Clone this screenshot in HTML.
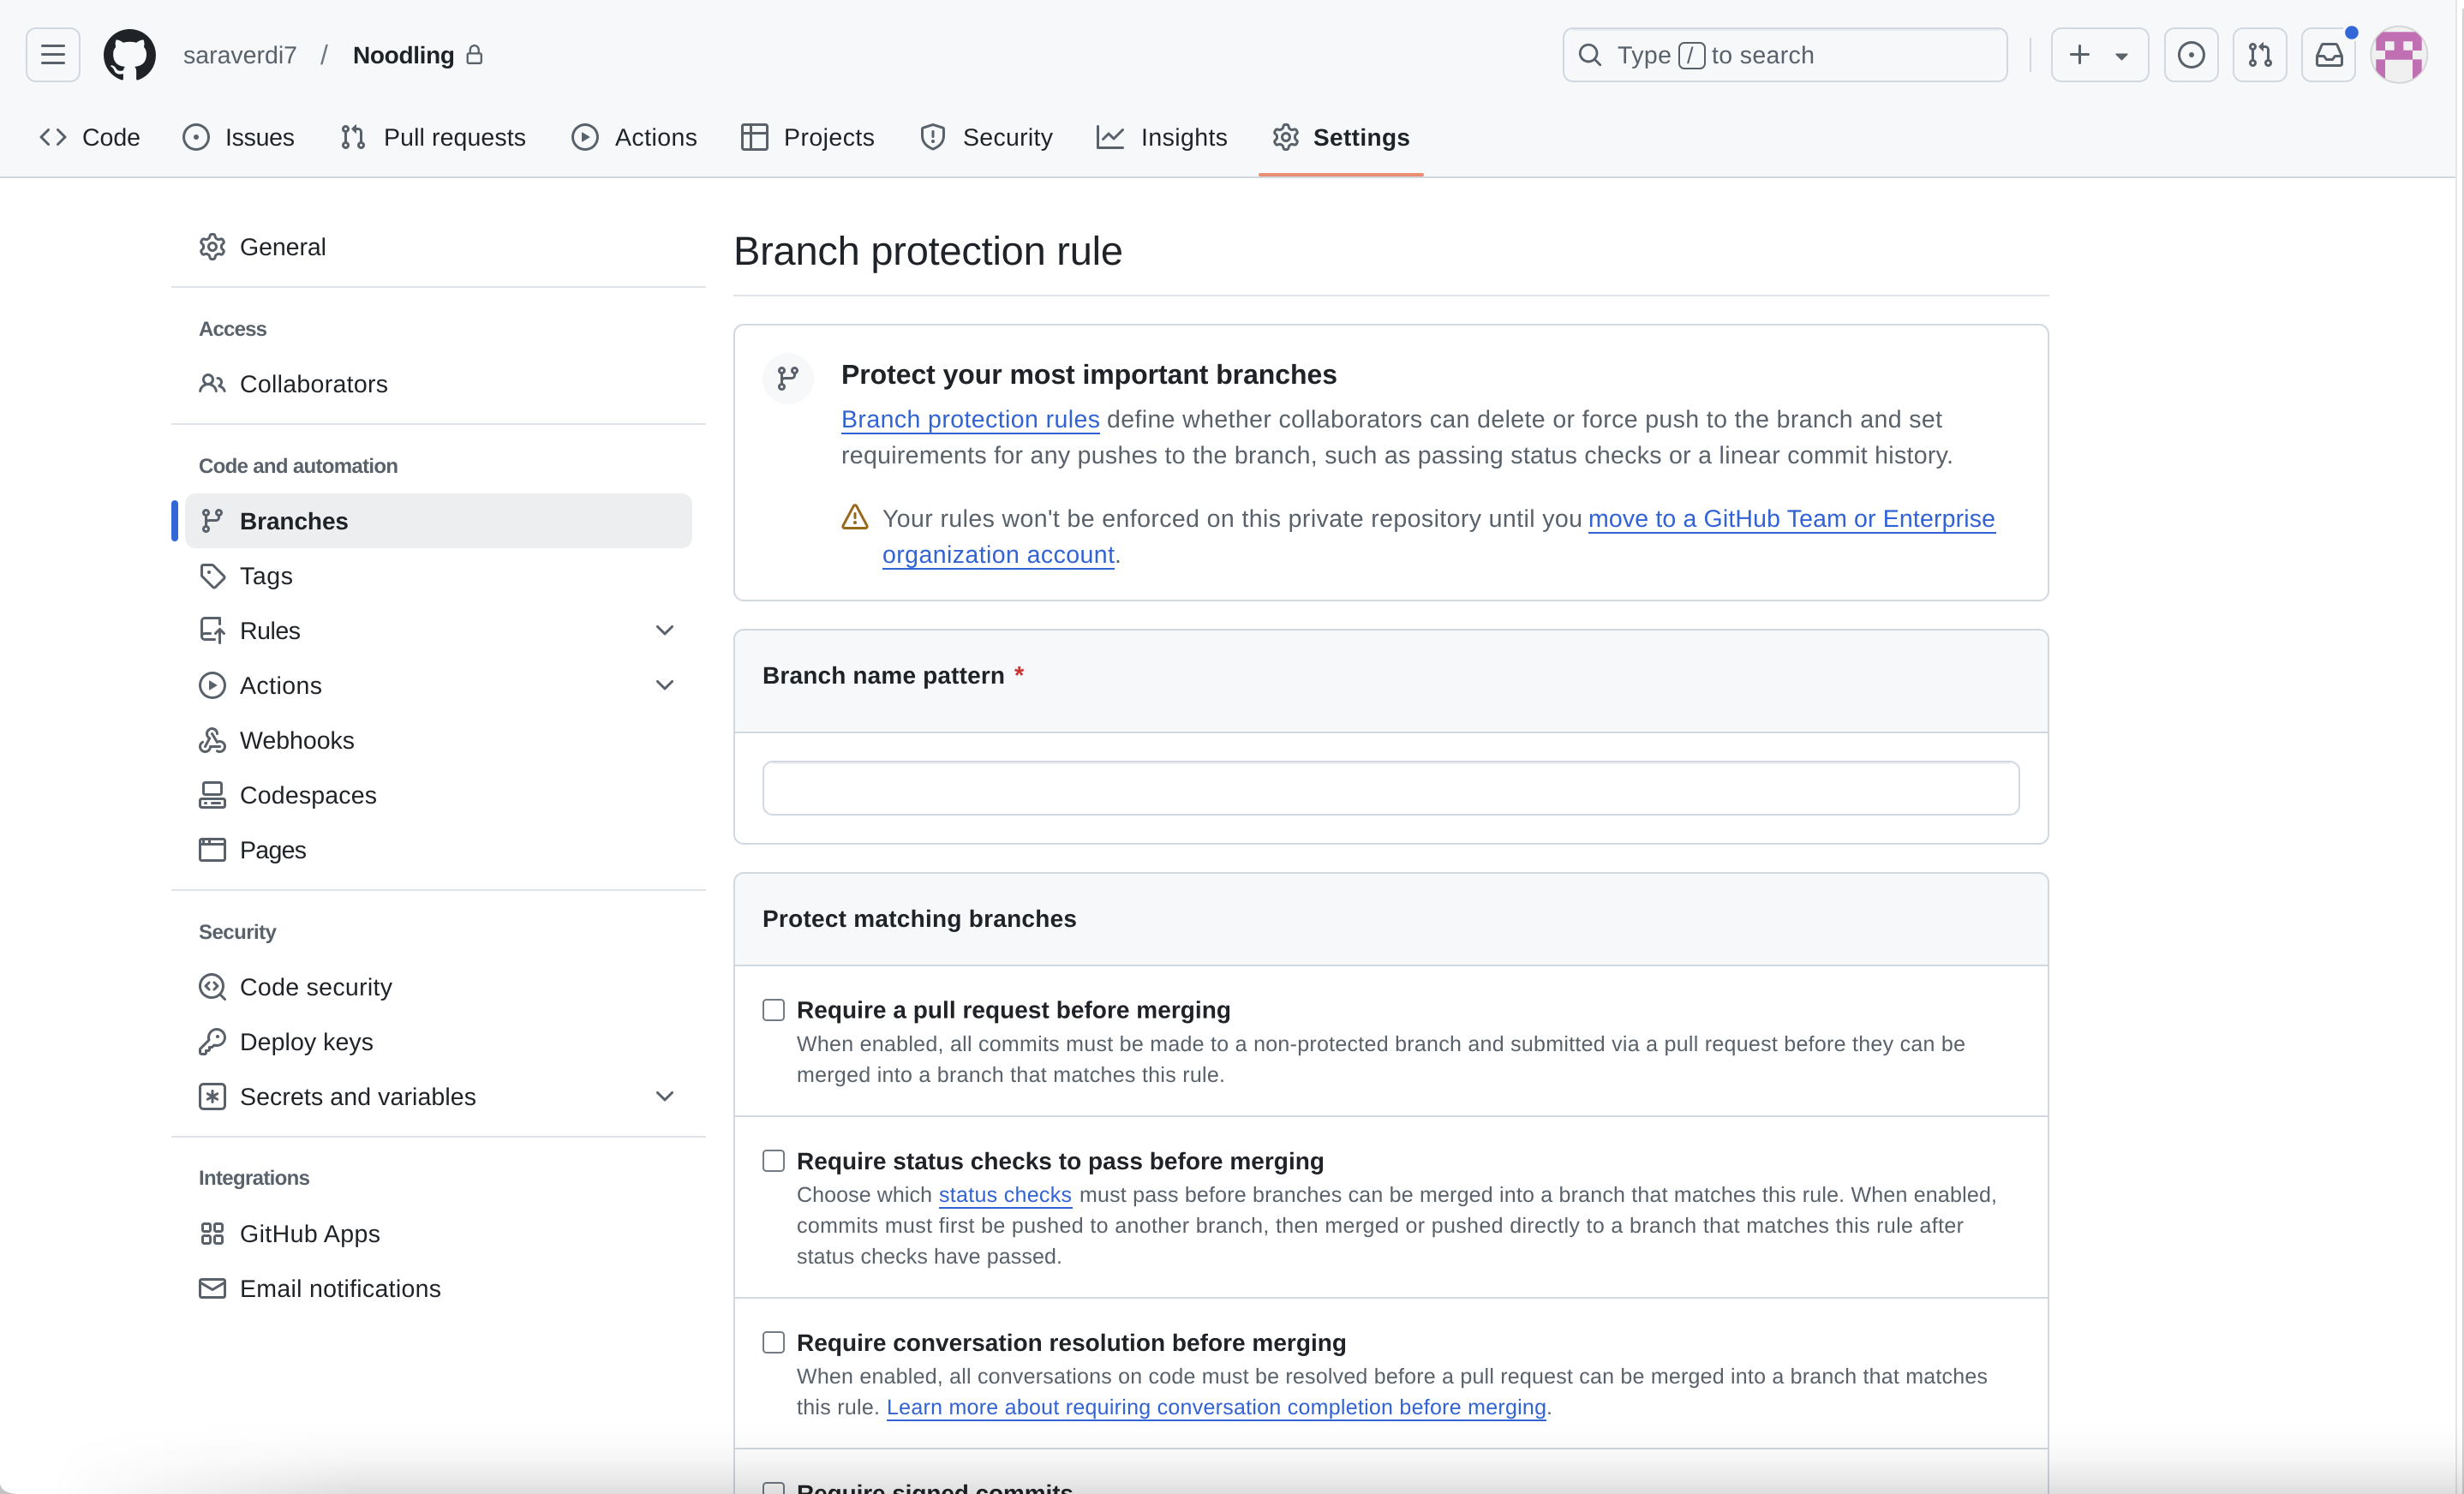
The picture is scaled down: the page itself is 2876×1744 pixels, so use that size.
<!DOCTYPE html>
<html lang="en"><head><meta charset="utf-8"><title>Branch protection rule</title>
<style>
html,body{margin:0;padding:0;background:#fff;width:2876px;height:1744px;overflow:hidden}
svg{position:absolute;left:0;top:0;display:block}
text{font-family:"Liberation Sans",sans-serif;text-rendering:geometricPrecision;font-size:28.5px;fill:#1f2328;white-space:pre}
.b{font-weight:700;font-size:28px}
.m{fill:#59616b}
.n{font-size:25px;fill:#59616b}
.l{fill:#3263d4}
.nl{font-size:25px;fill:#3263d4}
.h{font-weight:700;font-size:24px;fill:#59616b}
.i{fill:#59616b}
.bx{fill:none;stroke:#d1d8e0;stroke-width:2}
.cb{fill:#fff;stroke:#737b84;stroke-width:2}
#shade{position:absolute;left:0;top:1660px;width:2876px;height:84px;
background:linear-gradient(to bottom,rgba(0,0,0,0) 0%,rgba(0,0,0,.012) 25%,rgba(0,0,0,.04) 55%,rgba(0,0,0,.085) 80%,rgba(0,0,0,.13) 100%);
-webkit-mask-image:linear-gradient(to right,transparent 60px,#000 420px);mask-image:linear-gradient(to right,transparent 60px,#000 420px)}
</style></head><body>
<svg xmlns="http://www.w3.org/2000/svg" width="2876" height="1744" viewBox="0 0 2876 1744">
<defs>
<symbol id="bars" viewBox="0 0 16 16"><path d="M1 2.75A.75.75 0 0 1 1.75 2h12.5a.75.75 0 0 1 0 1.5H1.75A.75.75 0 0 1 1 2.75Zm0 5A.75.75 0 0 1 1.75 7h12.5a.75.75 0 0 1 0 1.5H1.75A.75.75 0 0 1 1 7.75ZM1.75 12h12.5a.75.75 0 0 1 0 1.5H1.75a.75.75 0 0 1 0-1.5Z"/></symbol>
<symbol id="code" viewBox="0 0 16 16"><path d="m11.28 3.22 4.25 4.25a.75.75 0 0 1 0 1.06l-4.25 4.25a.749.749 0 0 1-1.275-.326.749.749 0 0 1 .215-.734L13.94 8l-3.72-3.72a.749.749 0 0 1 .326-1.275.749.749 0 0 1 .734.215Zm-6.56 0a.751.751 0 0 1 1.042.018.751.751 0 0 1 .018 1.042L2.06 8l3.72 3.72a.749.749 0 0 1-.326 1.275.749.749 0 0 1-.734-.215L.47 8.53a.75.75 0 0 1 0-1.06Z"/></symbol>
<symbol id="issue" viewBox="0 0 16 16"><path d="M8 9.5a1.5 1.5 0 1 0 0-3 1.5 1.5 0 0 0 0 3Z"/><path d="M8 0a8 8 0 1 1 0 16A8 8 0 0 1 8 0ZM1.5 8a6.5 6.5 0 1 0 13 0 6.5 6.5 0 0 0-13 0Z"/></symbol>
<symbol id="pr" viewBox="0 0 16 16"><path d="M1.5 3.25a2.25 2.25 0 1 1 3 2.122v5.256a2.251 2.251 0 1 1-1.5 0V5.372A2.25 2.25 0 0 1 1.5 3.25Zm5.677-.177L9.573.677A.25.25 0 0 1 10 .854V2.5h1A2.5 2.5 0 0 1 13.5 5v5.628a2.251 2.251 0 1 1-1.5 0V5a1 1 0 0 0-1-1h-1v1.646a.25.25 0 0 1-.427.177L7.177 3.427a.25.25 0 0 1 0-.354ZM3.75 2.5a.75.75 0 1 0 0 1.5.75.75 0 0 0 0-1.5Zm0 9.5a.75.75 0 1 0 0 1.5.75.75 0 0 0 0-1.5Zm8.25.75a.75.75 0 1 0 1.5 0 .75.75 0 0 0-1.5 0Z"/></symbol>
<symbol id="play" viewBox="0 0 16 16"><path d="M8 0a8 8 0 1 1 0 16A8 8 0 0 1 8 0ZM1.5 8a6.5 6.5 0 1 0 13 0 6.5 6.5 0 0 0-13 0Zm4.879-2.773 4.264 2.559a.25.25 0 0 1 0 .428l-4.264 2.559A.25.25 0 0 1 6 10.559V5.442a.25.25 0 0 1 .379-.215Z"/></symbol>
<symbol id="table" viewBox="0 0 16 16"><path d="M0 1.75C0 .784.784 0 1.75 0h12.5C15.216 0 16 .784 16 1.75v12.5A1.75 1.75 0 0 1 14.25 16H1.75A1.75 1.75 0 0 1 0 14.25ZM6.5 6.5v8h7.75a.25.25 0 0 0 .25-.25V6.5Zm8-1.5V1.75a.25.25 0 0 0-.25-.25H6.5V5Zm-13 1.5v7.75c0 .138.112.25.25.25H5v-8ZM5 5V1.5H1.75a.25.25 0 0 0-.25.25V5Z"/></symbol>
<symbol id="shield" viewBox="0 0 16 16"><path d="M7.467.133a1.748 1.748 0 0 1 1.066 0l5.25 1.68A1.75 1.75 0 0 1 15 3.48V7c0 1.566-.32 3.182-1.303 4.682-.983 1.498-2.585 2.813-5.032 3.855a1.697 1.697 0 0 1-1.33 0c-2.447-1.042-4.049-2.357-5.032-3.855C1.32 10.182 1 8.566 1 7V3.48a1.75 1.75 0 0 1 1.217-1.667Zm.61 1.429a.25.25 0 0 0-.153 0l-5.25 1.68a.25.25 0 0 0-.174.238V7c0 1.358.275 2.666 1.057 3.86.784 1.194 2.121 2.34 4.366 3.297a.196.196 0 0 0 .154 0c2.245-.956 3.582-2.104 4.366-3.298C13.225 9.666 13.5 8.36 13.5 7V3.48a.251.251 0 0 0-.174-.237l-5.25-1.68ZM8.75 4.75v3a.75.75 0 0 1-1.5 0v-3a.75.75 0 0 1 1.5 0ZM9 10.5a1 1 0 1 1-2 0 1 1 0 0 1 2 0Z"/></symbol>
<symbol id="graph" viewBox="0 0 16 16"><path d="M1.5 1.75V13.5h13.75a.75.75 0 0 1 0 1.5H.75a.75.75 0 0 1-.75-.75V1.75a.75.75 0 0 1 1.5 0Zm14.28 2.53-5.25 5.25a.75.75 0 0 1-1.06 0L7 7.06 4.28 9.78a.751.751 0 0 1-1.042-.018.751.751 0 0 1-.018-1.042l3.25-3.25a.75.75 0 0 1 1.06 0L10 7.94l4.72-4.72a.751.751 0 0 1 1.042.018.751.751 0 0 1 .018 1.042Z"/></symbol>
<symbol id="gear" viewBox="0 0 16 16"><path d="M8 0a8.2 8.2 0 0 1 .701.031C9.444.095 9.99.645 10.16 1.29l.288 1.107c.018.066.079.158.212.224.231.114.454.243.668.386.123.082.233.09.299.071l1.103-.303c.644-.176 1.392.021 1.82.63.27.385.506.792.704 1.218.315.675.111 1.422-.364 1.891l-.814.806c-.049.048-.098.147-.088.294.016.257.016.515 0 .772-.01.147.038.246.088.294l.814.806c.475.469.679 1.216.364 1.891a7.977 7.977 0 0 1-.704 1.217c-.428.61-1.176.807-1.82.63l-1.102-.302c-.067-.019-.177-.011-.3.071a5.909 5.909 0 0 1-.668.386c-.133.066-.194.158-.211.224l-.29 1.106c-.168.646-.715 1.196-1.458 1.26a8.006 8.006 0 0 1-1.402 0c-.743-.064-1.289-.614-1.458-1.26l-.289-1.106c-.018-.066-.079-.158-.212-.224a5.738 5.738 0 0 1-.668-.386c-.123-.082-.233-.09-.299-.071l-1.103.303c-.644.176-1.392-.021-1.82-.63a8.12 8.12 0 0 1-.704-1.218c-.315-.675-.111-1.422.363-1.891l.815-.806c.05-.048.098-.147.088-.294a6.214 6.214 0 0 1 0-.772c.01-.147-.038-.246-.088-.294l-.815-.806C.635 6.045.431 5.298.746 4.623a7.92 7.92 0 0 1 .704-1.217c.428-.61 1.176-.807 1.82-.63l1.102.302c.067.019.177.011.3-.071.214-.143.437-.272.668-.386.133-.066.194-.158.211-.224l.29-1.106C6.009.645 6.556.095 7.299.03 7.53.01 7.764 0 8 0Zm-.571 1.525c-.036.003-.108.036-.137.146l-.289 1.105c-.147.561-.549.967-.998 1.189-.173.086-.34.183-.5.29-.417.278-.97.423-1.529.27l-1.103-.303c-.109-.03-.175.016-.195.045-.22.312-.412.644-.573.99-.014.031-.021.11.059.19l.815.806c.411.406.562.957.53 1.456a4.709 4.709 0 0 0 0 .582c.032.499-.119 1.05-.53 1.456l-.815.806c-.081.08-.073.159-.059.19.162.346.353.677.573.989.02.03.085.076.195.046l1.102-.303c.56-.153 1.113-.008 1.53.27.161.107.328.204.501.29.447.222.85.629.997 1.189l.289 1.105c.029.109.101.143.137.146a6.6 6.6 0 0 0 1.142 0c.036-.003.108-.036.137-.146l.289-1.105c.147-.561.549-.967.998-1.189.173-.086.34-.183.5-.29.417-.278.97-.423 1.529-.27l1.103.303c.109.029.175-.016.195-.045.22-.313.411-.644.573-.99.014-.031.021-.11-.059-.19l-.815-.806c-.411-.406-.562-.957-.53-1.456a4.709 4.709 0 0 0 0-.582c-.032-.499.119-1.05.53-1.456l.815-.806c.081-.08.073-.159.059-.19a6.464 6.464 0 0 0-.573-.989c-.02-.03-.085-.076-.195-.046l-1.102.303c-.56.153-1.113.008-1.53-.27a4.44 4.44 0 0 0-.501-.29c-.447-.222-.85-.629-.997-1.189l-.289-1.105c-.029-.11-.101-.143-.137-.146a6.6 6.6 0 0 0-1.142 0ZM11 8a3 3 0 1 1-6 0 3 3 0 0 1 6 0ZM9.5 8a1.5 1.5 0 1 0-3.001.001A1.5 1.5 0 0 0 9.5 8Z"/></symbol>
<symbol id="search" viewBox="0 0 16 16"><path d="M10.68 11.74a6 6 0 0 1-7.922-8.982 6 6 0 0 1 8.982 7.922l3.04 3.04a.749.749 0 0 1-.326 1.275.749.749 0 0 1-.734-.215ZM11.5 7a4.499 4.499 0 1 0-8.997 0A4.499 4.499 0 0 0 11.5 7Z"/></symbol>
<symbol id="plus" viewBox="0 0 16 16"><path d="M7.75 2a.75.75 0 0 1 .75.75V7h4.25a.75.75 0 0 1 0 1.5H8.5v4.25a.75.75 0 0 1-1.5 0V8.5H2.75a.75.75 0 0 1 0-1.5H7V2.75A.75.75 0 0 1 7.75 2Z"/></symbol>
<symbol id="inbox" viewBox="0 0 16 16"><path d="M2.8 2.06A1.75 1.75 0 0 1 4.41 1h7.18c.7 0 1.333.417 1.61 1.06l2.74 6.395c.04.093.06.194.06.295v4.5A1.75 1.75 0 0 1 14.25 15H1.75A1.75 1.75 0 0 1 0 13.25v-4.5c0-.101.02-.202.06-.295Zm1.61.44a.25.25 0 0 0-.23.152L1.887 8H4.75a.75.75 0 0 1 .6.3L6.625 10h2.75l1.275-1.7a.75.75 0 0 1 .6-.3h2.863L11.82 2.652a.25.25 0 0 0-.23-.152Zm10.09 7h-2.875l-1.275 1.7a.75.75 0 0 1-.6.3h-3.5a.75.75 0 0 1-.6-.3L4.375 9.5H1.5v3.75c0 .138.112.25.25.25h12.5a.25.25 0 0 0 .25-.25Z"/></symbol>
<symbol id="people" viewBox="0 0 16 16"><path d="M2 5.5a3.5 3.5 0 1 1 5.898 2.549 5.508 5.508 0 0 1 3.034 4.084.75.75 0 1 1-1.482.235 4 4 0 0 0-7.9 0 .75.75 0 0 1-1.482-.236A5.507 5.507 0 0 1 3.102 8.05 3.493 3.493 0 0 1 2 5.5ZM11 4a3.001 3.001 0 0 1 2.22 5.018 5.01 5.01 0 0 1 2.56 3.012.749.749 0 0 1-.885.954.752.752 0 0 1-.549-.514 3.507 3.507 0 0 0-2.522-2.372.75.75 0 0 1-.574-.73v-.352a.75.75 0 0 1 .416-.672A1.5 1.5 0 0 0 11 5.5.75.75 0 0 1 11 4Zm-5.5-.5a2 2 0 1 0-.001 3.999A2 2 0 0 0 5.5 3.5Z"/></symbol>
<symbol id="branch" viewBox="0 0 16 16"><path d="M9.5 3.25a2.25 2.25 0 1 1 3 2.122V6A2.5 2.5 0 0 1 10 8.5H6a1 1 0 0 0-1 1v1.128a2.251 2.251 0 1 1-1.5 0V5.372a2.25 2.25 0 1 1 1.5 0v1.836A2.493 2.493 0 0 1 6 7h4a1 1 0 0 0 1-1v-.628A2.25 2.25 0 0 1 9.5 3.25Zm-6 0a.75.75 0 1 0 1.5 0 .75.75 0 0 0-1.5 0Zm8.25-.75a.75.75 0 1 0 0 1.5.75.75 0 0 0 0-1.5ZM4.25 12a.75.75 0 1 0 0 1.5.75.75 0 0 0 0-1.5Z"/></symbol>
<symbol id="tag" viewBox="0 0 16 16"><path d="M1 7.775V2.75C1 1.784 1.784 1 2.75 1h5.025c.464 0 .91.184 1.238.513l6.25 6.25a1.75 1.75 0 0 1 0 2.474l-5.026 5.026a1.75 1.75 0 0 1-2.474 0l-6.25-6.25A1.752 1.752 0 0 1 1 7.775Zm1.5 0c0 .066.026.13.073.177l6.25 6.25a.25.25 0 0 0 .354 0l5.025-5.025a.25.25 0 0 0 0-.354l-6.25-6.25a.25.25 0 0 0-.177-.073H2.75a.25.25 0 0 0-.25.25ZM6 5a1 1 0 1 1 0 2 1 1 0 0 1 0-2Z"/></symbol>
<symbol id="push" viewBox="0 0 16 16"><path d="M1 2.5A2.5 2.5 0 0 1 3.5 0h8.75a.75.75 0 0 1 .75.75v3.5a.75.75 0 0 1-1.5 0V1.5h-8a1 1 0 0 0-1 1v6.708A2.493 2.493 0 0 1 3.5 9h3.25a.75.75 0 0 1 0 1.5H3.5a1 1 0 0 0 0 2h5.75a.75.75 0 0 1 0 1.5H3.5A2.5 2.5 0 0 1 1 11.5Zm13.23 7.79h-.001l-1.224-1.224v6.184a.75.75 0 0 1-1.5 0V9.066L10.28 10.29a.75.75 0 0 1-1.06-1.061l2.505-2.504a.75.75 0 0 1 1.06 0L15.29 9.23a.751.751 0 0 1-.018 1.042.751.751 0 0 1-1.042.018Z"/></symbol>
<symbol id="webhook" viewBox="0 0 16 16"><path d="M5.5 4.25a2.25 2.25 0 0 1 4.5 0 .75.75 0 0 0 1.5 0 3.75 3.75 0 1 0-6.14 2.889l-2.272 4.258a.75.75 0 0 0 1.324.706L7 7.25a.75.75 0 0 0-.309-1.016A2.25 2.25 0 0 1 5.5 4.25Z"/><path d="M7.364 3.607a.75.75 0 0 1 1.03.257l2.608 4.349a3.75 3.75 0 1 1-.628 6.785.75.75 0 0 1 .752-1.299 2.25 2.25 0 1 0-.033-3.88.75.75 0 0 1-1.03-.256L7.107 4.636a.75.75 0 0 1 .257-1.03Z"/><path d="M2.9 8.776A.75.75 0 0 1 2.625 9.8 2.25 2.25 0 1 0 6 11.75a.75.75 0 0 1 .75-.751h5.5a.75.75 0 0 1 0 1.5H7.425a3.751 3.751 0 1 1-5.55-3.998.75.75 0 0 1 1.024.274Z"/></symbol>
<symbol id="codespaces" viewBox="0 0 16 16"><path d="M0 11.25c0-.966.784-1.75 1.75-1.75h12.5c.966 0 1.75.784 1.75 1.75v3A1.75 1.75 0 0 1 14.25 16H1.75A1.75 1.75 0 0 1 0 14.25Zm2-9.5C2 .784 2.784 0 3.75 0h8.5C13.216 0 14 .784 14 1.75v5a1.75 1.75 0 0 1-1.75 1.75h-8.5A1.75 1.75 0 0 1 2 6.75Zm1.75-.25a.25.25 0 0 0-.25.25v5c0 .138.112.25.25.25h8.5a.25.25 0 0 0 .25-.25v-5a.25.25 0 0 0-.25-.25Zm-2 9.5a.25.25 0 0 0-.25.25v3c0 .138.112.25.25.25h12.5a.25.25 0 0 0 .25-.25v-3a.25.25 0 0 0-.25-.25Z"/><path d="M7 12.75a.75.75 0 0 1 .75-.75h4.5a.75.75 0 0 1 0 1.5h-4.5a.75.75 0 0 1-.75-.75Zm-4 0a.75.75 0 0 1 .75-.75h.5a.75.75 0 0 1 0 1.5h-.5a.75.75 0 0 1-.75-.75Z"/></symbol>
<symbol id="browser" viewBox="0 0 16 16"><path d="M0 2.75C0 1.784.784 1 1.75 1h12.5c.966 0 1.75.784 1.75 1.75v10.5A1.75 1.75 0 0 1 14.25 15H1.75A1.75 1.75 0 0 1 0 13.25ZM14.5 5.5h-13v7.75c0 .138.112.25.25.25h12.5a.25.25 0 0 0 .25-.25Zm-.25-3H7V4h7.5V2.75a.25.25 0 0 0-.25-.25ZM5.5 4V2.5h-2V4ZM2 4V2.5h-.25a.25.25 0 0 0-.25.25V4Z"/></symbol>
<symbol id="codescan" viewBox="0 0 16 16"><path d="M8.47 4.97a.75.75 0 0 0 0 1.06L9.94 7.5 8.47 8.97a.75.75 0 1 0 1.06 1.06l2-2a.75.75 0 0 0 0-1.06l-2-2a.75.75 0 0 0-1.06 0ZM6.53 6.03a.75.75 0 0 0-1.06-1.06l-2 2a.75.75 0 0 0 0 1.06l2 2a.75.75 0 1 0 1.06-1.06L5.06 7.5l1.47-1.47Z"/><path d="M12.246 13.307a7.501 7.501 0 1 1 1.06-1.06l2.474 2.473a.749.749 0 0 1-.326 1.275.749.749 0 0 1-.734-.215ZM1.5 7.5a6.002 6.002 0 0 0 3.608 5.504 6.002 6.002 0 0 0 6.486-1.117.748.748 0 0 1 .292-.293A6 6 0 1 0 1.5 7.5Z"/></symbol>
<symbol id="key" viewBox="0 0 16 16"><path d="M10.5 0a5.499 5.499 0 1 1-1.288 10.848l-.932.932a.749.749 0 0 1-.53.22H7v.75a.749.749 0 0 1-.22.53l-.5.5a.749.749 0 0 1-.53.22H5v.75a.749.749 0 0 1-.22.53l-.5.5a.749.749 0 0 1-.53.22h-2A1.75 1.75 0 0 1 0 14.25v-2c0-.199.079-.389.22-.53l4.932-4.932A5.5 5.5 0 0 1 10.5 0Zm-4 5.5c-.001.431.069.86.205 1.269a.75.75 0 0 1-.181.768L1.5 12.56v1.69c0 .138.112.25.25.25h1.69l.06-.06v-1.19a.75.75 0 0 1 .75-.75h1.19l.06-.06v-1.19a.75.75 0 0 1 .75-.75h1.19l1.023-1.025a.75.75 0 0 1 .768-.18A4 4 0 1 0 6.5 5.5ZM11 6a1 1 0 1 1 0-2 1 1 0 0 1 0 2Z"/></symbol>
<symbol id="asterisk" viewBox="0 0 16 16"><path d="M0 2.75A2.75 2.75 0 0 1 2.75 0h10.5A2.75 2.75 0 0 1 16 2.75v10.5A2.75 2.75 0 0 1 13.25 16H2.75A2.75 2.75 0 0 1 0 13.25ZM2.75 1.5c-.69 0-1.25.56-1.25 1.25v10.5c0 .69.56 1.25 1.25 1.25h10.5c.69 0 1.25-.56 1.25-1.25V2.75c0-.69-.56-1.25-1.25-1.25Z"/><path d="M8 4a.75.75 0 0 1 .75.75V6.7l1.69-.975a.75.75 0 0 1 .75 1.3L9.5 8l1.69.976a.75.75 0 0 1-.75 1.298L8.75 9.3v1.95a.75.75 0 0 1-1.5 0V9.3l-1.69.975a.75.75 0 0 1-.75-1.3L6.5 8l-1.69-.975a.75.75 0 0 1 .75-1.3l1.69.976V4.75A.75.75 0 0 1 8 4Z"/></symbol>
<symbol id="apps" viewBox="0 0 16 16"><path d="M1.5 3.25c0-.966.784-1.75 1.75-1.75h2.5c.966 0 1.75.784 1.75 1.75v2.5A1.75 1.75 0 0 1 5.75 7.5h-2.5A1.75 1.75 0 0 1 1.5 5.75Zm7 0c0-.966.784-1.75 1.75-1.75h2.5c.966 0 1.75.784 1.75 1.75v2.5a1.75 1.75 0 0 1-1.75 1.75h-2.5A1.75 1.75 0 0 1 8.5 5.75Zm-7 7c0-.966.784-1.75 1.75-1.75h2.5c.966 0 1.75.784 1.75 1.75v2.5a1.75 1.75 0 0 1-1.75 1.75h-2.5a1.75 1.75 0 0 1-1.75-1.75Zm7 0c0-.966.784-1.75 1.75-1.75h2.5c.966 0 1.75.784 1.75 1.75v2.5a1.75 1.75 0 0 1-1.75 1.75h-2.5a1.75 1.75 0 0 1-1.75-1.75ZM3.25 3a.25.25 0 0 0-.25.25v2.5c0 .138.112.25.25.25h2.5A.25.25 0 0 0 6 5.75v-2.5A.25.25 0 0 0 5.75 3Zm7 0a.25.25 0 0 0-.25.25v2.5c0 .138.112.25.25.25h2.5a.25.25 0 0 0 .25-.25v-2.5a.25.25 0 0 0-.25-.25Zm-7 7a.25.25 0 0 0-.25.25v2.5c0 .138.112.25.25.25h2.5a.25.25 0 0 0 .25-.25v-2.5a.25.25 0 0 0-.25-.25Zm7 0a.25.25 0 0 0-.25.25v2.5c0 .138.112.25.25.25h2.5a.25.25 0 0 0 .25-.25v-2.5a.25.25 0 0 0-.25-.25Z"/></symbol>
<symbol id="mail" viewBox="0 0 16 16"><path d="M1.75 2h12.5c.966 0 1.75.784 1.75 1.75v8.5A1.75 1.75 0 0 1 14.25 14H1.75A1.75 1.75 0 0 1 0 12.25v-8.5C0 2.784.784 2 1.75 2ZM1.5 12.251c0 .138.112.25.25.25h12.5a.25.25 0 0 0 .25-.25V5.809L8.38 9.397a.75.75 0 0 1-.76 0L1.5 5.809v6.442Zm13-8.181v-.32a.25.25 0 0 0-.25-.25H1.75a.25.25 0 0 0-.25.25v.32L8 7.88Z"/></symbol>
<symbol id="chev" viewBox="0 0 16 16"><path d="M12.78 5.22a.749.749 0 0 1 0 1.06l-4.25 4.25a.749.749 0 0 1-1.06 0L3.22 6.28a.749.749 0 1 1 1.06-1.06L8 8.939l3.72-3.719a.749.749 0 0 1 1.06 0Z"/></symbol>
<symbol id="alert" viewBox="0 0 16 16"><path d="M6.457 1.047c.659-1.234 2.427-1.234 3.086 0l6.082 11.378A1.75 1.75 0 0 1 14.082 15H1.918a1.75 1.75 0 0 1-1.543-2.575Zm1.763.707a.25.25 0 0 0-.44 0L1.698 13.132a.25.25 0 0 0 .22.368h12.164a.25.25 0 0 0 .22-.368Zm.53 3.996v2.5a.75.75 0 0 1-1.5 0v-2.5a.75.75 0 0 1 1.5 0ZM9 11a1 1 0 1 1-2 0 1 1 0 0 1 2 0Z"/></symbol>
<symbol id="lock" viewBox="0 0 16 16"><path d="M4 4a4 4 0 0 1 8 0v2h.25c.966 0 1.75.784 1.75 1.75v5.5A1.75 1.75 0 0 1 12.25 15h-8.5A1.75 1.75 0 0 1 2 13.25v-5.5C2 6.784 2.784 6 3.75 6H4Zm6.5 2V4a2.5 2.5 0 1 0-5 0v2ZM3.5 7.75v5.5c0 .138.112.25.25.25h8.5a.25.25 0 0 0 .25-.25v-5.5a.25.25 0 0 0-.25-.25h-8.5a.25.25 0 0 0-.25.25Z"/></symbol>
<clipPath id="av"><circle cx="2800.3" cy="63.7" r="32.5"/></clipPath>
</defs>

<!-- window edge -->
<rect x="2866" y="0" width="2" height="1744" fill="#e6e6e6"/>
<rect x="2874" y="10" width="2" height="1734" fill="#d2d2d2"/>

<!-- header -->
<rect x="0" y="0" width="2866" height="206" fill="#f6f8fa"/>
<rect x="0" y="206" width="2866" height="2" fill="#d0d7de"/>

<rect class="bx" x="31" y="33" width="62" height="62" rx="11"/>
<use href="#bars" class="i" x="46" y="48" width="32" height="32"/>
<g transform="translate(121 34) scale(3.81)"><path fill="#1f2328" d="M8 0c4.42 0 8 3.58 8 8a8.013 8.013 0 0 1-5.45 7.59c-.4.08-.55-.17-.55-.38 0-.27.01-1.13.01-2.2 0-.75-.25-1.23-.54-1.48 1.78-.2 3.65-.88 3.65-3.95 0-.88-.31-1.59-.82-2.15.08-.2.36-1.02-.08-2.12 0 0-.67-.22-2.2.82-.64-.18-1.32-.27-2-.27-.68 0-1.36.09-2 .27-1.53-1.03-2.2-.82-2.2-.82-.44 1.1-.16 1.92-.08 2.12-.51.56-.82 1.28-.82 2.15 0 3.06 1.86 3.75 3.64 3.95-.23.2-.44.55-.51 1.07-.46.21-1.61.55-2.33-.66-.15-.24-.6-.83-1.23-.82-.67.01-.27.38.01.53.34.19.73.9.82 1.13.16.45.68 1.31 2.69.94 0 .67.01 1.3.01 1.49 0 .21-.15.45-.55.38A7.995 7.995 0 0 1 0 8c0-4.42 3.58-8 8-8Z"/></g>
<text class="m" x="214" y="74" textLength="133">saraverdi7</text>
<text x="374" y="75" style="font-size:32px;fill:#6e7781" textLength="11">/</text>
<text class="b" x="412" y="74" textLength="119">Noodling</text>
<use href="#lock" class="i" x="541.5" y="52" width="24.5" height="24.5"/>

<use href="#code" class="i" x="46" y="144" width="32" height="32"/>
<text x="96" y="170" textLength="68">Code</text>
<use href="#issue" class="i" x="213" y="144" width="32" height="32"/>
<text x="263" y="170" textLength="81">Issues</text>
<use href="#pr" class="i" x="396" y="144" width="32" height="32"/>
<text x="448" y="170" textLength="166">Pull requests</text>
<use href="#play" class="i" x="667" y="144" width="32" height="32"/>
<text x="718" y="170" textLength="96">Actions</text>
<use href="#table" class="i" x="865" y="144" width="32" height="32"/>
<text x="915" y="170" textLength="106">Projects</text>
<use href="#shield" class="i" x="1073" y="144" width="32" height="32"/>
<text x="1124" y="170" textLength="105">Security</text>
<use href="#graph" class="i" x="1280" y="144" width="32" height="32"/>
<text x="1332" y="170" textLength="101">Insights</text>
<use href="#gear" class="i" x="1485" y="144" width="32" height="32"/>
<text class="b" x="1533" y="170" textLength="113">Settings</text>
<rect x="1469" y="202" width="193" height="4" rx="2" fill="#ea8e73"/>

<!-- search -->
<rect class="bx" x="1825" y="33" width="518" height="62" rx="11"/>
<rect x="1835" y="34" width="498" height="2" fill="#e8ebef"/>
<use href="#search" class="i" x="1841" y="49" width="30" height="30"/>
<text class="m" x="1888" y="74" textLength="63">Type</text>
<rect x="1960" y="50" width="30" height="30" rx="6" fill="none" stroke="#59616b" stroke-width="2"/>
<text class="m" x="1969" y="74" style="font-size:27px" textLength="11">/</text>
<text class="m" x="1998" y="74" textLength="120">to search</text>
<rect x="2369" y="44" width="2" height="40" fill="#d0d7de"/>

<rect class="bx" x="2395" y="33" width="113" height="62" rx="11"/>
<use href="#plus" class="i" x="2412" y="48" width="32" height="32"/>
<path class="i" d="M2470 62.5h13a.7.7 0 0 1 .5 1.2l-6.5 6.5a.7.7 0 0 1-1 0l-6.500-6.500a.7.7 0 0 1 .5-1.2Z"/>
<rect class="bx" x="2527" y="33" width="62" height="62" rx="11"/>
<use href="#issue" class="i" x="2542" y="48" width="32" height="32"/>
<rect class="bx" x="2607" y="33" width="62" height="62" rx="11"/>
<use href="#pr" class="i" x="2622" y="48" width="32" height="32"/>
<rect class="bx" x="2687" y="33" width="62" height="62" rx="11"/>
<use href="#inbox" class="i" x="2703" y="48" width="32" height="32"/>
<circle cx="2745" cy="38" r="11" fill="#f6f8fa"/>
<circle cx="2745" cy="38" r="7.8" fill="#3366d6"/>

<!-- avatar -->
<circle cx="2800.3" cy="63.7" r="33" fill="#f0f0f0" stroke="#d6d6d6" stroke-width="2"/>
<g clip-path="url(#av)" fill="#c06fb3">
<rect x="2773.3" y="37.3" width="53.4" height="11"/>
<rect x="2773.3" y="48" width="10.7" height="11"/><rect x="2794.6" y="48" width="10.7" height="11"/><rect x="2816" y="48" width="10.7" height="11"/>
<rect x="2784" y="58.7" width="32" height="11"/>
<rect x="2773.3" y="69.3" width="10.7" height="30"/><rect x="2816" y="69.3" width="10.7" height="30"/>
</g>

<!-- sidebar -->
<use href="#gear" class="i" x="232" y="272" width="32" height="32"/>
<text x="280" y="298" textLength="101">General</text>
<rect x="200" y="334" width="624" height="2" fill="#dfe3e7"/>
<text class="h" x="232" y="392" textLength="80">Access</text>
<use href="#people" class="i" x="232" y="432" width="32" height="32"/>
<text x="280" y="458" textLength="173">Collaborators</text>
<rect x="200" y="494" width="624" height="2" fill="#dfe3e7"/>
<text class="h" x="232" y="552" textLength="233">Code and automation</text>
<rect x="216" y="576" width="592" height="64" rx="12" fill="#eceef0"/>
<rect x="200" y="584" width="8" height="48" rx="4" fill="#3366d6"/>
<use href="#branch" class="i" x="232" y="592" width="32" height="32"/>
<text class="b" x="280" y="618" textLength="127">Branches</text>
<use href="#tag" class="i" x="232" y="656" width="32" height="32"/>
<text x="280" y="682" textLength="62">Tags</text>
<use href="#push" class="i" x="232" y="720" width="32" height="32"/>
<text x="280" y="746" textLength="71">Rules</text>
<use href="#chev" class="i" x="760" y="720" width="32" height="32"/>
<use href="#play" class="i" x="232" y="784" width="32" height="32"/>
<text x="280" y="810" textLength="96">Actions</text>
<use href="#chev" class="i" x="760" y="784" width="32" height="32"/>
<use href="#webhook" class="i" x="232" y="848" width="32" height="32"/>
<text x="280" y="874" textLength="134">Webhooks</text>
<use href="#codespaces" class="i" x="232" y="912" width="32" height="32"/>
<text x="280" y="938" textLength="160">Codespaces</text>
<use href="#browser" class="i" x="232" y="976" width="32" height="32"/>
<text x="280" y="1002" textLength="78">Pages</text>
<rect x="200" y="1038" width="624" height="2" fill="#dfe3e7"/>
<text class="h" x="232" y="1096" textLength="91">Security</text>
<use href="#codescan" class="i" x="232" y="1136" width="32" height="32"/>
<text x="280" y="1162" textLength="178">Code security</text>
<use href="#key" class="i" x="232" y="1200" width="32" height="32"/>
<text x="280" y="1226" textLength="156">Deploy keys</text>
<use href="#asterisk" class="i" x="232" y="1264" width="32" height="32"/>
<text x="280" y="1290" textLength="276">Secrets and variables</text>
<use href="#chev" class="i" x="760" y="1264" width="32" height="32"/>
<rect x="200" y="1326" width="624" height="2" fill="#dfe3e7"/>
<text class="h" x="232" y="1383" textLength="130">Integrations</text>
<use href="#apps" class="i" x="232" y="1424" width="32" height="32"/>
<text x="280" y="1450" textLength="164">GitHub Apps</text>
<use href="#mail" class="i" x="232" y="1488" width="32" height="32"/>
<text x="280" y="1514" textLength="235">Email notifications</text>

<!-- main title -->
<text x="856" y="309" style="font-size:47px" textLength="455">Branch protection rule</text>
<rect x="856" y="344" width="1536" height="2" fill="#dfe3e7"/>

<!-- box 1 -->
<rect class="bx" x="857" y="379" width="1534" height="322" rx="11"/>
<circle cx="920" cy="442" r="30" fill="#f6f8fa"/>
<use href="#branch" class="i" x="904" y="426" width="32" height="32"/>
<text class="b" x="982" y="448" style="font-size:32px" textLength="579">Protect your most important branches</text>
<text class="l" x="982" y="499" textLength="302">Branch protection rules</text>
<rect x="982" y="505" width="302" height="2" fill="#3263d4"/>
<text class="m" x="1292" y="499" textLength="975">define whether collaborators can delete or force push to the branch and set</text>
<text class="m" x="982" y="541" textLength="1298">requirements for any pushes to the branch, such as passing status checks or a linear commit history.</text>
<use href="#alert" x="982" y="588" width="32" height="32" fill="#96691c"/>
<text class="m" x="1030" y="615" textLength="817">Your rules won't be enforced on this private repository until you</text>
<text class="l" x="1854" y="615" textLength="475">move to a GitHub Team or Enterprise</text>
<rect x="1854" y="621" width="476" height="2" fill="#3263d4"/>
<text class="l" x="1030" y="657" textLength="271">organization account</text>
<rect x="1030" y="663" width="271" height="2" fill="#3263d4"/>
<text class="m" x="1301" y="657">.</text>

<!-- box 2 -->
<path d="M857 855V747a12 12 0 0 1 12-12H2379a12 12 0 0 1 12 12V855Z" fill="#f6f8fa"/>
<rect class="bx" x="857" y="735" width="1534" height="250" rx="11"/>
<rect x="857" y="854" width="1534" height="2" fill="#d1d8e0"/>
<text class="b" x="890" y="798" textLength="283">Branch name pattern</text>
<text class="b" x="1184" y="798" style="font-size:29px;fill:#c93532" textLength="12">*</text>
<rect class="bx" x="891" y="889" width="1466" height="62" rx="11" style="fill:#fff"/>
<rect x="901" y="890" width="1446" height="2" fill="#eef0f3"/>

<!-- box 3 -->
<path d="M857 1127V1031a12 12 0 0 1 12-12H2379a12 12 0 0 1 12 12V1127Z" fill="#f6f8fa"/>
<rect class="bx" x="857" y="1019" width="1534" height="900" rx="11"/>
<rect x="857" y="1126" width="1534" height="2" fill="#d1d8e0"/>
<text class="b" x="890" y="1082" textLength="367">Protect matching branches</text>

<rect class="cb" x="891" y="1167" width="24" height="24" rx="3.5"/>
<text class="b" x="930" y="1188.5" textLength="507">Require a pull request before merging</text>
<text class="n" x="930" y="1227" textLength="1364">When enabled, all commits must be made to a non-protected branch and submitted via a pull request before they can be</text>
<text class="n" x="930" y="1263" textLength="500">merged into a branch that matches this rule.</text>
<rect x="857" y="1302" width="1534" height="2" fill="#d1d8e0"/>

<rect class="cb" x="891" y="1343" width="24" height="24" rx="3.5"/>
<text class="b" x="930" y="1365" textLength="616">Require status checks to pass before merging</text>
<text class="n" x="930" y="1403" textLength="158">Choose which</text>
<text class="nl" x="1096" y="1403" textLength="155">status checks</text>
<rect x="1096" y="1409" width="156" height="2" fill="#3263d4"/>
<text class="n" x="1260" y="1403" textLength="1071">must pass before branches can be merged into a branch that matches this rule. When enabled,</text>
<text class="n" x="930" y="1439" textLength="1362">commits must first be pushed to another branch, then merged or pushed directly to a branch that matches this rule after</text>
<text class="n" x="930" y="1475" textLength="310">status checks have passed.</text>
<rect x="857" y="1514" width="1534" height="2" fill="#d1d8e0"/>

<rect class="cb" x="891" y="1555" width="24" height="24" rx="3.5"/>
<text class="b" x="930" y="1577" textLength="642">Require conversation resolution before merging</text>
<text class="n" x="930" y="1615" textLength="1390">When enabled, all conversations on code must be resolved before a pull request can be merged into a branch that matches</text>
<text class="n" x="930" y="1651" textLength="97">this rule.</text>
<text class="nl" x="1035" y="1651" textLength="770">Learn more about requiring conversation completion before merging</text>
<rect x="1035" y="1657" width="770" height="2" fill="#3263d4"/>
<text class="n" x="1805" y="1651">.</text>
<rect x="857" y="1690" width="1534" height="2" fill="#d1d8e0"/>

<rect class="cb" x="891" y="1731" width="24" height="24" rx="3.5"/>
<text class="b" x="930" y="1753" textLength="323">Require signed commits</text>

<path d="M0 1732C2 1740 8 1743 20 1744H0Z" fill="#c4c4c4"/>
</svg>
<div id="shade"></div>
</body></html>
